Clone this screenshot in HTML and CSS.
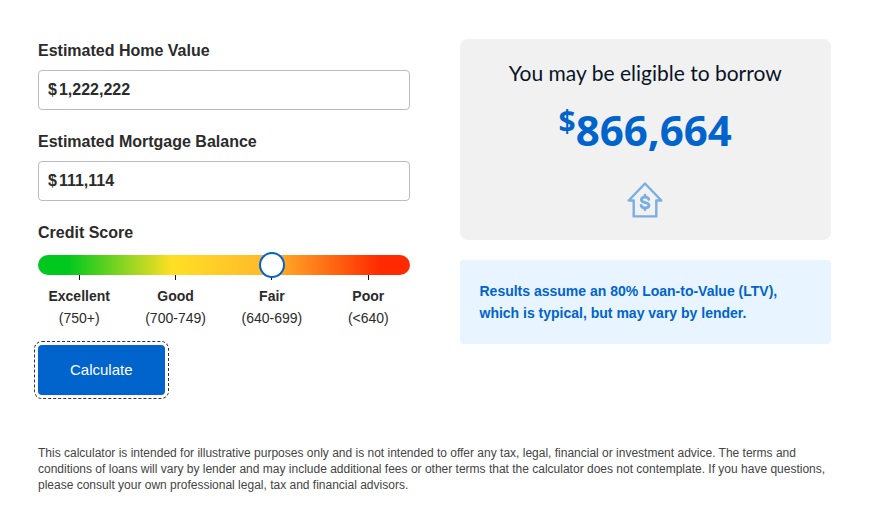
FILE: index.html
```html
<!DOCTYPE html>
<html lang="en">
<head>
    <meta charset="UTF-8">
    <meta name="viewport" content="width=device-width, initial-scale=1.0">
    <title>Home Equity Calculator</title>
    <link rel="stylesheet" href="styles.css">
</head>
<body>
    <main class="calculator">
        <div class="columns">
            <form class="calc-form">
                <div class="field">
                    <label for="home-value">Estimated Home Value</label>
                    <div class="money-box">
                        <span>$</span>
                        <input type="text" id="home-value" value="1,222,222">
                    </div>
                </div>
                <div class="field">
                    <label for="mortgage-balance">Estimated Mortgage Balance</label>
                    <div class="money-box">
                        <span>$</span>
                        <input type="text" id="mortgage-balance" value="111,114">
                    </div>
                </div>
                <div class="score">
                    <label for="credit-score">Credit Score</label>
                    <input type="range" id="credit-score" class="score-slider" min="0" max="3" step="1" value="2">
                    <ul class="score-labels">
                        <li><strong>Excellent</strong>(750+)</li>
                        <li><strong>Good</strong>(700-749)</li>
                        <li><strong>Fair</strong>(640-699)</li>
                        <li><strong>Poor</strong>(&lt;640)</li>
                    </ul>
                </div>
                <button type="button" class="calculate-btn">Calculate</button>
            </form>

            <section class="results">
                <div class="result-card">
                    <h2>You may be eligible to borrow</h2>
                    <p class="amount"><span>$</span>866,664</p>
                    <svg class="house-icon" width="36" height="36" viewBox="0 0 36 36" fill="none" stroke="#7aaee3" stroke-linejoin="round" stroke-linecap="round">
                        <path stroke-width="2.4" d="M18 1.5 L1.7 18.5 H6.7 V34.4 H29.3 V18.5 H34.3 Z"/>
                        <path stroke-width="2.8" d="M21.8 17.4 C21.4 15.9 20.2 15.2 18 15.2 C15.6 15.2 14.4 16.2 14.4 17.7 C14.4 21.8 22 19.4 22 23.3 C22 25 20.6 25.9 18.2 25.9 C15.8 25.9 14.4 25 14.1 23.4 M18 13.2 V14.5 M18 26.5 V27.8"/>
                    </svg>
                </div>
                <p class="note">Results assume an 80% Loan-to-Value (LTV), which is typical, but may vary by lender.</p>
            </section>
        </div>
        <p class="disclaimer">This calculator is intended for illustrative purposes only and is not intended to offer any tax, legal, financial or investment advice. The terms and conditions of loans will vary by lender and may include additional fees or other terms that the calculator does not contemplate. If you have questions, please consult your own professional legal, tax and financial advisors.</p>
    </main>
</body>
</html>
```
FILE: styles.css
```css
* {
    box-sizing: border-box;
}
body {
    margin: 0;
    background-color: #fff;
    color: #2b2b2b;
    font-family: "Liberation Sans", Arial, sans-serif;
    font-size: 16px;
}
.calculator {
    padding: 39px 38px;
}
.columns {
    display: grid;
    grid-template-columns: 1fr 1fr;
    gap: 50px;
}
label {
    display: block;
    line-height: 24px;
    font-weight: bold;
}
.field {
    margin-bottom: 20px;
}
.money-box {
    display: flex;
    align-items: center;
    height: 40px;
    margin-top: 7px;
    padding: 0 9px;
    border: 1px solid #bbb;
    border-radius: 4px;
    font-weight: bold;
}
.money-box input {
    flex: 1;
    min-width: 0;
    padding: 0 2px;
    border: none;
    outline: none;
    background: none;
    color: inherit;
    font: inherit;
}
.score-slider {
    appearance: none;
    position: relative;
    display: block;
    width: 100%;
    height: 20px;
    margin: 10px 0 0;
    padding: 0 28px;
    border-radius: 10px;
    background: linear-gradient(to right, #00c81e 0%, #00c81e 8%, #ffdf25 36%, #ffb82c 62%, #ff2a00 92%, #ff2a00 100%);
    cursor: pointer;
}
.score-slider::-webkit-slider-thumb {
    appearance: none;
    width: 26px;
    height: 26px;
    border: 2px solid #0064cc;
    border-radius: 50%;
    background-color: #fff;
}
.score-labels {
    display: grid;
    grid-template-columns: repeat(4, 1fr);
    margin: 0 -7px;
    padding: 0;
    list-style: none;
    font-size: 14px;
    line-height: 22px;
    text-align: center;
}
.score-labels li::before {
    content: "";
    display: block;
    width: 1px;
    height: 5px;
    margin: 0 auto 5px;
    background-color: #111;
}
.score-labels strong {
    display: block;
}
.calculate-btn {
    margin-top: 16px;
    padding: 0 32px 2px;
    height: 50px;
    border: none;
    border-radius: 4px;
    outline: 1px dashed #333;
    outline-offset: 3px;
    background-color: #0064cc;
    color: #fff;
    font-family: inherit;
    font-size: 15px;
    cursor: pointer;
}
.result-card {
    padding: 20px 20px 22px;
    border-radius: 8px;
    background-color: #f1f1f1;
    text-align: center;
}
.result-card h2 {
    margin: 0;
    color: #0a1428;
    font-family: Lato, sans-serif;
    font-size: 21px;
    font-weight: 400;
    line-height: 28px;
}
.amount {
    margin: 13px 0 22px;
    color: #0064cc;
    font-family: "Noto Sans", sans-serif;
    font-size: 42px;
    font-weight: 700;
    line-height: 60px;
}
.amount span {
    font-size: 30px;
    line-height: 1;
    vertical-align: 14px;
}
.house-icon {
    display: block;
    margin: 0 auto;
}
.note {
    margin: 20px 0 0;
    padding: 20px;
    border-radius: 4px;
    background-color: #e8f4ff;
    color: #0064cc;
    font-size: 14px;
    font-weight: bold;
    line-height: 22px;
}
.disclaimer {
    margin: 50px 0 0;
    color: #444;
    font-size: 12px;
    line-height: 16px;
}
```
